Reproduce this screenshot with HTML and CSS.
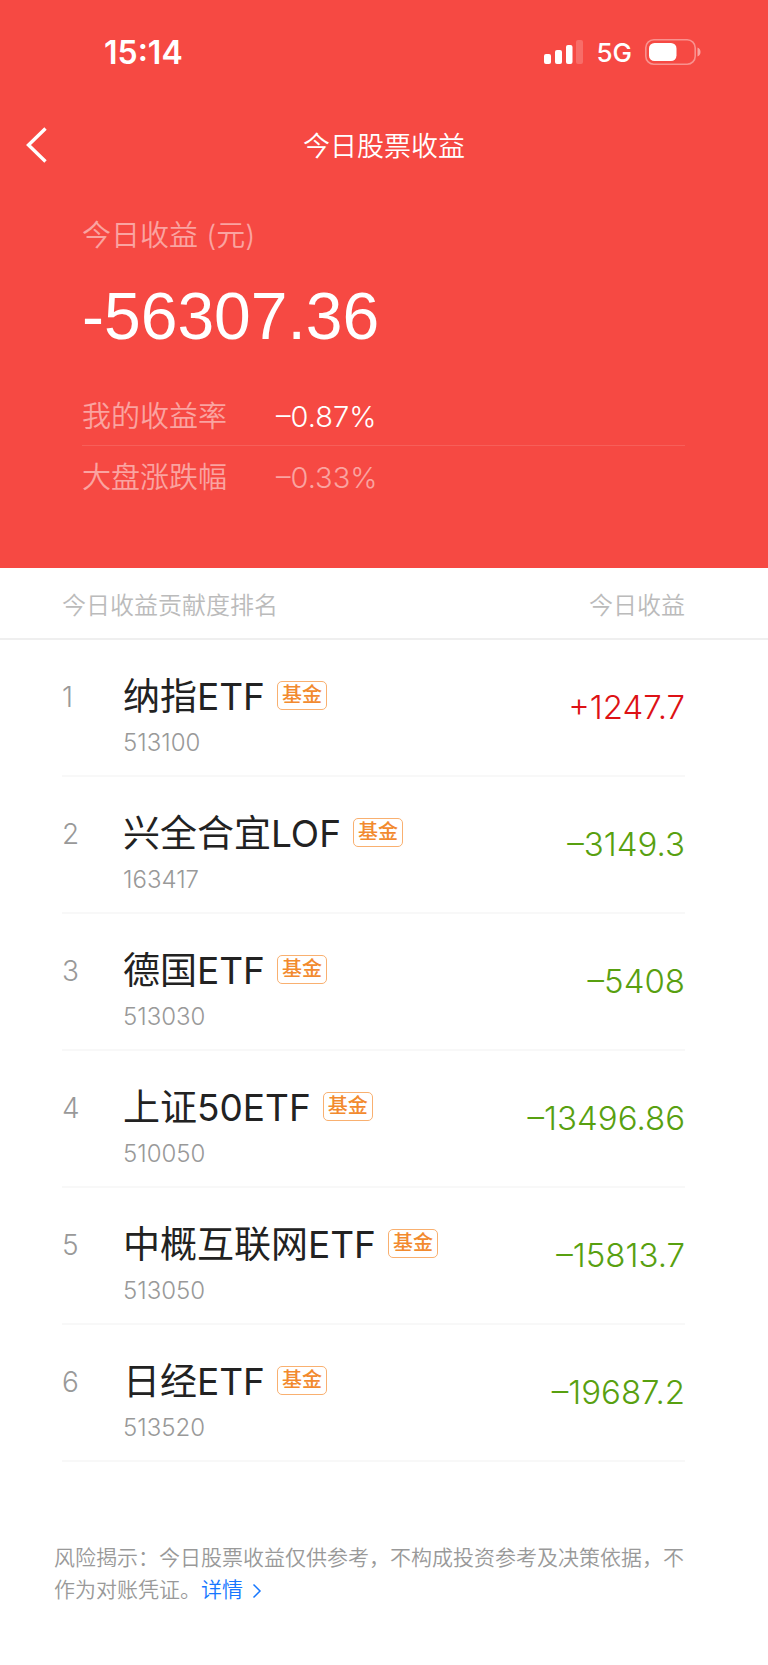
FILE: index.html
```html
<!DOCTYPE html>
<html lang="zh-CN">

<head>
	<meta charset="utf-8">
	<meta name="viewport" content="width=device-width, initial-scale=1">
	<title>今日股票收益</title>
	<link rel="stylesheet" href="styles.css">
</head>

<body>
	<header class="top">
		<div class="status">
			<span class="time">15:14</span>
			<div class="status-right">
				<svg class="signal" width="39" height="26" viewBox="0 0 39 26" fill="#fff">
					<rect x="0" y="15" width="7" height="10" rx="2" />
					<rect x="11" y="11" width="7" height="14" rx="2" />
					<rect x="22" y="6" width="6.500" height="19" rx="2" />
					<rect x="32" y="1" width="7" height="24" rx="2" opacity=".2" />
				</svg>
				<span class="network">5G</span>
				<svg class="battery" width="57" height="26" viewBox="0 0 57 26">
					<rect x=".8" y=".8" width="49.400" height="24.400" rx="8" fill="none" stroke="#fff" stroke-width="1.600" opacity=".4" />
					<rect x="4" y="4" width="27.500" height="18" rx="5.500" fill="#fff" />
					<path d="M52.500 8.500c4 1.500 4 7.500 0 9z" fill="#fff" opacity=".5" />
				</svg>
			</div>
		</div>
		<nav class="nav">
			<button class="back" type="button" aria-label="返回">
				<svg width="24" height="38" viewBox="0 0 24 38" fill="none" stroke="#fff" stroke-width="3.400">
					<path d="M21.500 2.500L4.500 19l17 16.500" />
				</svg>
			</button>
			<h1 class="title">今日股票收益</h1>
		</nav>
		<section class="summary">
			<div class="label">今日收益 (元)</div>
			<div class="total">-56307.36</div>
			<dl class="rates">
				<div class="rate">
					<dt>我的收益率</dt>
					<dd class="mine">–0.87%</dd>
				</div>
				<div class="rate">
					<dt>大盘涨跌幅</dt>
					<dd>–0.33%</dd>
				</div>
			</dl>
		</section>
	</header>

	<table class="rank">
		<thead>
			<tr>
				<th colspan="2">今日收益贡献度排名</th>
				<th class="profit">今日收益</th>
			</tr>
		</thead>
		<tbody>
			<tr>
				<td class="no">1</td>
				<td>
					<div class="name">纳指ETF<span class="tag">基金</span></div>
					<div class="code">513100</div>
				</td>
				<td class="profit up">+1247.7</td>
			</tr>
			<tr>
				<td class="no">2</td>
				<td>
					<div class="name">兴全合宜LOF<span class="tag">基金</span></div>
					<div class="code">163417</div>
				</td>
				<td class="profit down">–3149.3</td>
			</tr>
			<tr>
				<td class="no">3</td>
				<td>
					<div class="name">德国ETF<span class="tag">基金</span></div>
					<div class="code">513030</div>
				</td>
				<td class="profit down">–5408</td>
			</tr>
			<tr>
				<td class="no">4</td>
				<td>
					<div class="name">上证50ETF<span class="tag">基金</span></div>
					<div class="code">510050</div>
				</td>
				<td class="profit down">–13496.86</td>
			</tr>
			<tr>
				<td class="no">5</td>
				<td>
					<div class="name">中概互联网ETF<span class="tag">基金</span></div>
					<div class="code">513050</div>
				</td>
				<td class="profit down">–15813.7</td>
			</tr>
			<tr>
				<td class="no">6</td>
				<td>
					<div class="name">日经ETF<span class="tag">基金</span></div>
					<div class="code">513520</div>
				</td>
				<td class="profit down">–19687.2</td>
			</tr>
		</tbody>
	</table>

	<footer class="risk">
		风险揭示：今日股票收益仅供参考，不构成投资参考及决策依据，不作为对账凭证。<a class="more" href="#">详情<svg width="10" height="16" viewBox="0 0 10 16" fill="none" stroke="currentColor" stroke-width="1.500"><path d="M1.500 1.500L8 8l-6.500 6.500" /></svg></a>
	</footer>
</body>

</html>
```

FILE: styles.css
```css
body,
h1,
dl,
dd {
	margin: 0;
	padding: 0;
}

body {
	background: #fff;
	color: #222;
	font-family: Inter, "Noto Sans CJK SC", sans-serif;
	font-weight: 350;
}

/* 顶部红色区域 */
.top {
	background: #f64943;
	color: #fff;
}

.status {
	display: flex;
	justify-content: space-between;
	align-items: center;
	height: 104px;
	padding: 0 66px 0 104px;
}

.time {
	font-size: 32px;
	font-weight: 600;
}

.status-right {
	display: flex;
	align-items: center;
	gap: 13px;
}

.network {
	font-size: 26px;
	font-weight: 500;
}

.nav {
	display: grid;
	grid-template-columns: 72px 1fr 72px;
	align-items: center;
	height: 82px;
}

.back {
	display: flex;
	padding: 0 0 0 24px;
	border: 0;
	background: none;
	cursor: pointer;
}

.title {
	padding-top: 4px;
	font-size: 27px;
	font-weight: 350;
	line-height: 38px;
	text-align: center;
}

.summary {
	padding: 30px 83px 62px 82px;
}

.label,
.rate {
	color: rgba(255, 255, 255, .5);
	font-size: 29px;
}

.label {
	line-height: 40px;
}

.total {
	margin: 20px 0 33px;
	font-family: "Liberation Sans", Arial, sans-serif;
	font-size: 66px;
	font-weight: 400;
	line-height: 80px;
}

.rate {
	display: grid;
	grid-template-columns: 194px 1fr;
	line-height: 56px;
}

.rate + .rate {
	padding-top: 4px;
	border-top: 1px solid rgba(255, 255, 255, .12);
}

.mine {
	color: #fff;
}

/* 排名表 */
.rank {
	width: 100%;
	border-spacing: 0;
}

.rank th {
	height: 70px;
	padding: 0;
	border-bottom: 2px solid #efefef;
	color: #bbb;
	font-size: 24px;
	font-weight: 350;
	text-align: left;
}

.rank th:first-child {
	padding-left: 62px;
}

.rank td {
	padding: 32px 0 18px;
}

.rank tbody tr {
	background: linear-gradient(#f8f8f8, #f8f8f8) 62px 100% / calc(100% - 145px) 2px no-repeat;
}

.rank .no {
	width: 61px;
	padding-left: 62px;
	color: #999;
	font-size: 28px;
	line-height: 50px;
	vertical-align: top;
}

.name {
	display: flex;
	align-items: center;
	gap: 12px;
	font-size: 37px;
	font-weight: 400;
	line-height: 50px;
}

.tag {
	margin-bottom: 4px;
	padding: 0 4px;
	border: 1px solid #f9b070;
	border-radius: 5px;
	color: #f28a2e;
	font-size: 20px;
	font-weight: 500;
	line-height: 27px;
}

.code {
	margin-top: 5px;
	color: #999;
	font-size: 24px;
	line-height: 32px;
}

.rank .profit {
	padding-right: 83px;
	text-align: right;
}

.rank td.profit {
	padding-bottom: 36px;
	font-size: 33px;
}

.up {
	color: #dd1115;
}

.down {
	color: #58a010;
}

/* 风险提示 */
.risk {
	padding: 80px 74px 56px 54px;
	color: #999;
	font-size: 21px;
	line-height: 32px;
}

.more {
	color: #1677ff;
	text-decoration: none;
}

.more svg {
	margin-left: 9px;
	vertical-align: -2px;
}
```
